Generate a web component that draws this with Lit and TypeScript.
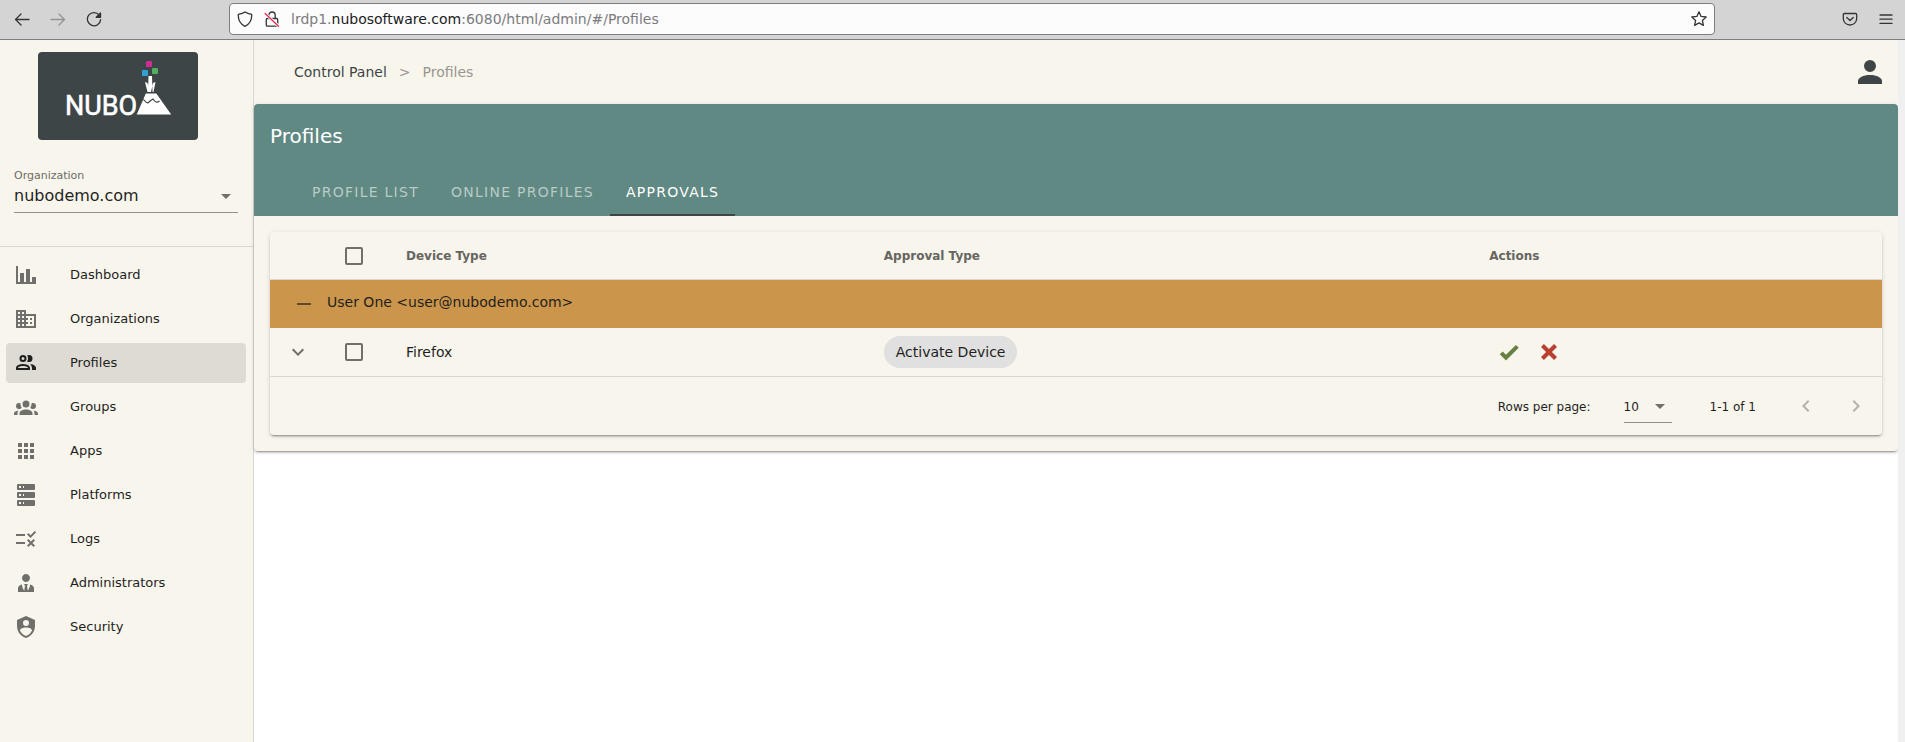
import { LitElement, html, css, svg, nothing } from "lit";
import { customElement, property, state } from "lit/decorators.js";
import { classMap } from "lit/directives/class-map.js";

const icons: Record<string, string> = {
  chart: "M22,21H2V3H4V19H6V10H10V19H12V6H16V19H18V14H22V21Z",
  domain:
    "M18,15H16V17H18M18,11H16V13H18M20,19H12V17H14V15H12V13H14V11H12V9H20M10,7H8V5H10M10,11H8V9H10M10,15H8V13H10M10,19H8V17H10M6,7H4V5H6M6,11H4V9H6M6,15H4V13H6M6,19H4V17H6M12,7V3H2V21H22V7H12Z",
  people:
    "M13.07 10.41A5 5 0 0 0 13.07 4.59A3.39 3.39 0 0 1 15 4A3.5 3.5 0 0 1 15 11A3.39 3.39 0 0 1 13.07 10.41M5.5 7.5A3.5 3.5 0 1 1 9 11A3.5 3.5 0 0 1 5.5 7.5M7.5 7.5A1.5 1.5 0 1 0 9 6A1.5 1.5 0 0 0 7.5 7.5M16 17V19H2V17S2 13 9 13 16 17 16 17M14 17C13.86 16.22 12.67 15 9 15S4.07 16.31 4 17M15.95 13A5.32 5.32 0 0 1 18 17V19H22V17S22 13.37 15.94 13Z",
  group:
    "M12,5.5A3.5,3.5 0 0,1 15.5,9A3.5,3.5 0 0,1 12,12.5A3.5,3.5 0 0,1 8.5,9A3.5,3.5 0 0,1 12,5.5M5,8C5.56,8 6.08,8.15 6.53,8.42C6.38,9.85 6.8,11.27 7.66,12.38C7.16,13.34 6.16,14 5,14A3,3 0 0,1 2,11A3,3 0 0,1 5,8M19,8A3,3 0 0,1 22,11A3,3 0 0,1 19,14C17.84,14 16.84,13.34 16.34,12.38C17.2,11.27 17.62,9.85 17.47,8.42C17.92,8.15 18.44,8 19,8M5.5,18.25C5.5,16.18 8.41,14.5 12,14.5C15.59,14.5 18.5,16.18 18.5,18.25V20H5.5V18.25M0,20V18.5C0,17.11 1.89,15.94 4.45,15.6C3.86,16.28 3.5,17.22 3.5,18.25V20H0M24,20H20.5V18.25C20.5,17.22 20.14,16.28 19.55,15.6C22.11,15.94 24,17.11 24,18.5V20Z",
  apps: "M16,20H20V16H16M16,14H20V10H16M10,8H14V4H10M16,8H20V4H16M10,14H14V10H10M4,14H8V10H4M4,20H8V16H4M10,20H14V16H10M4,8H8V4H4V8Z",
  server:
    "M4,1H20A1,1 0 0,1 21,2V6A1,1 0 0,1 20,7H4A1,1 0 0,1 3,6V2A1,1 0 0,1 4,1M4,9H20A1,1 0 0,1 21,10V14A1,1 0 0,1 20,15H4A1,1 0 0,1 3,14V10A1,1 0 0,1 4,9M4,17H20A1,1 0 0,1 21,18V22A1,1 0 0,1 20,23H4A1,1 0 0,1 3,22V18A1,1 0 0,1 4,17M9,5H10V3H9V5M9,13H10V11H9V13M9,21H10V19H9V21M5,3V5H7V3H5M5,11V13H7V11H5M5,19V21H7V19H5Z",
  rule: "M16.54 11L13 7.46l1.41-1.41 2.12 2.12 4.24-4.24 1.41 1.41L16.54 11zM11 7H2v2h9V7zm10 6.41L19.59 12 17 14.59 14.41 12 13 13.41 15.59 16 13 18.59 14.41 20 17 17.41 19.59 20 21 18.59 18.41 16 21 13.41zM11 15H2v2h9v-2z",
  admin:
    "M12 3C14.21 3 16 4.79 16 7S14.21 11 12 11 8 9.21 8 7 9.79 3 12 3M16 13.54C16 14.6 15.72 17.07 13.81 19.83L13 15L13.94 13.12C13.32 13.05 12.67 13 12 13S10.68 13.05 10.06 13.12L11 15L10.19 19.83C8.28 17.07 8 14.6 8 13.54C5.61 14.24 4 15.5 4 17V21H20V17C20 15.5 18.4 14.24 16 13.54Z",
  shield:
    "M12,1L3,5V11C3,16.55 6.84,21.74 12,23C17.16,21.74 21,16.55 21,11V5L12,1M12,5A3,3 0 0,1 15,8A3,3 0 0,1 12,11A3,3 0 0,1 9,8A3,3 0 0,1 12,5M17.13,17C15.92,18.85 14.11,20.24 12,20.92C9.89,20.24 8.08,18.85 6.87,17C6.53,16.5 6.24,16 6,15.47C6,13.82 8.71,12.47 12,12.47C15.29,12.47 18,13.79 18,15.47C17.76,16 17.47,16.5 17.13,17Z",
  check: "M9,20.42L2.79,14.21L5.62,11.38L9,14.77L18.88,4.88L21.71,7.71L9,20.42Z",
  close:
    "M20 6.91L17.09 4L12 9.09L6.91 4L4 6.91L9.09 12L4 17.09L6.91 20L12 14.91L17.09 20L20 17.09L14.91 12L20 6.91Z",
  minus: "M19,13H5V11H19V13Z",
  down: "M7.41,8.58L12,13.17L16.59,8.58L18,10L12,16L6,10L7.41,8.58Z",
  left: "M15.41,16.58L10.83,12L15.41,7.41L14,6L8,12L14,18L15.41,16.58Z",
  right: "M8.59,16.58L13.17,12L8.59,7.41L10,6L16,12L10,18L8.59,16.58Z",
  caret: "M7,10L12,15L17,10H7Z",
  account:
    "M12,4A4,4 0 0,1 16,8A4,4 0 0,1 12,12A4,4 0 0,1 8,8A4,4 0 0,1 12,4M12,14C16.42,14 20,15.79 20,18V20H4V18C4,15.79 7.58,14 12,14Z",
};

const icon = (name: string, size = 24) =>
  html`<svg width=${size} height=${size} viewBox="0 0 24 24" fill="currentColor" aria-hidden="true">
    ${svg`<path d=${icons[name]}></path>`}
  </svg>`;

const base = css`
  * {
    box-sizing: border-box;
  }
  svg {
    display: block;
    flex: none;
  }
  button,
  select,
  input {
    font: inherit;
    color: inherit;
    margin: 0;
  }
  button {
    display: inline-flex;
    align-items: center;
    justify-content: center;
    padding: 0;
    border: 0;
    background: none;
    cursor: pointer;
  }
  a {
    color: inherit;
    text-decoration: none;
  }
  .pick {
    display: grid;
    align-items: center;
    border-bottom: 1px solid #92908b;
  }
  .pick > * {
    grid-area: 1 / 1;
  }
  .pick svg {
    justify-self: end;
    pointer-events: none;
    color: #706f6b;
  }
  .pick select {
    width: 100%;
    appearance: none;
    border: 0;
    padding: 0;
    background: none;
    outline: none;
  }
`;

@customElement("browser-bar")
class BrowserBar extends LitElement {
  static styles = [
    base,
    css`
      :host {
        display: block;
      }
      .bar {
        display: flex;
        align-items: center;
        height: 40px;
        padding: 0 11px 2px 14px;
        background: #d4d4d4;
        border-bottom: 1px solid #7d7f7f;
        color: #333437;
      }
      .nav {
        display: flex;
        gap: 20px;
        width: 215px;
      }
      .off {
        color: #939393;
      }
      .address {
        display: flex;
        flex: 0 1 1486px;
        align-items: center;
        gap: 11px;
        height: 32px;
        padding: 0 7px;
        border: 1px solid #7d7f7f;
        border-radius: 4px;
        background: #fcfcfc;
      }
      .url {
        flex: 1;
        font-size: 14px;
        color: #7b7b7d;
        white-space: nowrap;
        overflow: hidden;
      }
      .host {
        color: #1b1b1e;
      }
      .tools {
        display: flex;
        gap: 20px;
        margin-left: auto;
      }
    `,
  ];

  render() {
    const line = (content: unknown) =>
      html`<svg width="16" height="16" viewBox="0 0 16 16" fill="none" stroke="currentColor" stroke-width="1.3" stroke-linecap="round" stroke-linejoin="round" aria-hidden="true">${content}</svg>`;
    return html`<header class="bar">
      <div class="nav">
        <button aria-label="Back">${line(svg`<path d="M15 8.5H1.5M7 3L1.500 8.500 7 14"/>`)}</button>
        <button class="off" aria-label="Forward" disabled>${line(svg`<path d="M1 8.500H14.500M9 3l5.500 5.500L9 14"/>`)}</button>
        <button aria-label="Reload">${line(svg`<path d="M13.300 4.200A6.600 6.600 0 1 0 14.600 8.600"/><path d="M14.500 2v4.300h-4.300z" fill="currentColor"/>`)}</button>
      </div>
      <div class="address">
        ${line(svg`<path d="M8 1C6 2.500 3.700 3 1.300 3.300C1 9 3 13 8 15.300C13 13 15 9 14.700 3.300C12.300 3 10 2.500 8 1z"/>`)}
        ${line(svg`<path d="M3.300 7.500h9.400q1 0 1 1v5.700q0 1-1 1H3.300q-1 0-1-1V8.500q0-1 1-1zM4.800 7.500V4.200a3.200 3.200 0 0 1 6.400 0v3.300"/><path d="M1.200 2.500L14.500 15.200" stroke="#fcfcfc" stroke-width="3"/><path d="M1.200 2.500L14.500 15.200" stroke="#e22850"/>`)}
        <div class="url" role="textbox" aria-label="Address">lrdp1.<span class="host">nubosoftware.com</span>:6080/html/admin/#/Profiles</div>
        <button aria-label="Bookmark this page">${line(svg`<path d="M8 .8l2.100 4.600 5.100.600-3.800 3.400 1 5L8 11.900l-4.400 2.500 1-5L.8 6l5.100-.600z"/>`)}</button>
      </div>
      <div class="tools">
        <button aria-label="Save to Pocket">${line(svg`<path d="M2.500 2.500h11q1.200 0 1.200 1.200V7.500A6.700 6.500 0 0 1 1.300 7.500V3.700q0-1.200 1.200-1.200zM4.800 6.500L8 9.500l3.200-3"/>`)}</button>
        <button aria-label="Menu">${line(svg`<path d="M2 4h12M2 8.200h12M2 12.400h12"/>`)}</button>
      </div>
    </header>`;
  }
}

@customElement("side-nav")
class SideNav extends LitElement {
  @property() active = "Profiles";

  private items: [string, string][] = [
    ["Dashboard", "chart"],
    ["Organizations", "domain"],
    ["Profiles", "people"],
    ["Groups", "group"],
    ["Apps", "apps"],
    ["Platforms", "server"],
    ["Logs", "rule"],
    ["Administrators", "admin"],
    ["Security", "shield"],
  ];

  static styles = [
    base,
    css`
      :host {
        display: block;
        width: 254px;
        flex: none;
        background: #f8f5ec;
        border-right: 1px solid #dad7d0;
      }
      .logo {
        margin: 12px 0 0 38px;
        border-radius: 4px;
        background: #3d4546;
      }
      .wordmark {
        font: 400 27px Roboto, sans-serif;
        fill: #fff;
        stroke: #fff;
        stroke-width: 0.6;
        stroke-linejoin: round;
      }
      .org {
        margin: 28px 15px 0 14px;
      }
      .caption {
        display: block;
        font-size: 11px;
        line-height: 16px;
        color: #6c6b67;
      }
      .org .pick {
        height: 29px;
        font-size: 16px;
      }
      .org select {
        padding-bottom: 5px;
      }
      .menu {
        display: flex;
        flex-direction: column;
        gap: 4px;
        margin-top: 33px;
        padding: 8px 7px 8px 6px;
        border-top: 1px solid #dad7d0;
      }
      .org .pick svg {
        margin-bottom: 4px;
      }
      .item {
        display: flex;
        align-items: center;
        gap: 32px;
        height: 40px;
        padding: 0 8px;
        border-radius: 4px;
        font-size: 13px;
        line-height: 20px;
      }
      .item svg {
        color: #706f6b;
      }
      .item.active {
        background: #dedbd4;
      }
      .item.active svg {
        color: #1f1f1e;
      }
    `,
  ];

  render() {
    return html`
      <svg class="logo" width="160" height="88" viewBox="0 0 160 88" role="img" aria-label="Nubo">
        <text class="wordmark" x="27" y="63">NUBO</text>
        <path fill="#fff" stroke="#3d4546" d="M98 63L107.500 41h11L134 63z" />
        <path fill="none" stroke="#3d4546" stroke-width="1.200" d="M102 49q3-3 5 0t4 1 4-3q3 5 6.500 2" />
        <path fill="#fff" d="M110.500 24h3.500l.5 16h-4.500zM107 30l2.500 1 2 9h-2zM117.500 30l-2.500 1-2 9h2.500z" />
        <rect x="108" y="9" width="6" height="6" rx="1" fill="#ce2e93" />
        <rect x="104" y="18" width="6" height="6" rx="1" fill="#2fa3d9" />
        <rect x="114" y="16" width="6" height="6" rx="1" fill="#54ae61" />
      </svg>
      <div class="org">
        <label class="caption" for="org">Organization</label>
        <div class="pick">
          <select id="org"><option>nubodemo.com</option></select>
          ${icon("caret")}
        </div>
      </div>
      <nav class="menu">
        ${this.items.map(
          ([label, name]) => html`<a
            href="#/${label}"
            class=${classMap({ item: true, active: label === this.active })}
            aria-current=${label === this.active ? "page" : nothing}
            >${icon(name)}<span>${label}</span></a
          >`
        )}
      </nav>
    `;
  }
}

@customElement("approvals-table")
class ApprovalsTable extends LitElement {
  @state() private rows = [{ device: "Firefox", approval: "Activate Device" }];

  static styles = [
    base,
    css`
      :host {
        display: block;
        border-radius: 4px;
        background: #f8f5ec;
        box-shadow: 0 3px 1px -2px rgba(0, 0, 0, 0.2), 0 2px 2px rgba(0, 0, 0, 0.14),
          0 1px 5px rgba(0, 0, 0, 0.12);
      }
      table {
        width: 100%;
        table-layout: fixed;
        border-collapse: separate;
        border-spacing: 0;
        font-size: 14px;
      }
      .c-expand {
        width: 56px;
      }
      .c-check {
        width: 64px;
      }
      .c-device {
        width: 29.64%;
      }
      .c-approval {
        width: 37.56%;
      }
      th,
      td {
        height: 48px;
        padding: 0 16px;
        text-align: left;
      }
      th {
        font-size: 12px;
        color: #666561;
        border-bottom: 1px solid #dad7d0;
      }
      .expand {
        display: flex;
        width: 24px;
        height: 24px;
        color: #706f6b;
      }
      .box {
        display: block;
        width: 18px;
        height: 18px;
        margin: 0 3px;
        appearance: none;
        border: 2px solid #706f6b;
        border-radius: 2px;
      }
      .group td {
        background: #cb964b;
      }
      .owner {
        display: flex;
        align-items: center;
        gap: 5px;
        padding-bottom: 4px;
      }
      .toggle {
        width: 36px;
        height: 36px;
        padding-top: 4px;
        color: #5f4a2c;
      }
      .chip {
        display: inline-flex;
        align-items: center;
        height: 32px;
        padding: 0 12px;
        border-radius: 16px;
        background: #e0e0e0;
      }
      .actions {
        display: flex;
      }
      .actions button {
        width: 40px;
        height: 36px;
      }
      .yes {
        color: #66803f;
      }
      .no {
        color: #b93f2e;
      }
      .foot {
        display: flex;
        align-items: center;
        justify-content: flex-end;
        height: 59px;
        padding-right: 8px;
        border-top: 1px solid #dad7d0;
        font-size: 12px;
      }
      .foot label,
      .foot span,
      .foot select {
        padding-top: 2px;
      }
      .foot .pick {
        width: 48px;
        height: 33px;
        margin: 0 38px 0 33px;
      }
      .pages {
        display: flex;
        gap: 14px;
        margin-left: 32px;
      }
      .pages button {
        width: 36px;
        height: 36px;
        color: #b4b1ab;
      }
    `,
  ];

  render() {
    return html`
      <table>
        <colgroup>
          <col class="c-expand" />
          <col class="c-check" />
          <col class="c-device" />
          <col class="c-approval" />
          <col />
        </colgroup>
        <thead>
          <tr>
            <th></th>
            <th><input class="box" type="checkbox" aria-label="Select all" /></th>
            <th scope="col">Device Type</th>
            <th scope="col">Approval Type</th>
            <th scope="col">Actions</th>
          </tr>
        </thead>
        <tbody>
          <tr class="group">
            <td colspan="5">
              <div class="owner">
                <button class="toggle" aria-label="Collapse group">${icon("minus")}</button>
                <span>User One &lt;user@nubodemo.com&gt;</span>
              </div>
            </td>
          </tr>
          ${this.rows.map(
            (r) => html`<tr>
              <td><button class="expand" aria-label="Expand row">${icon("down")}</button></td>
              <td><input class="box" type="checkbox" aria-label="Select ${r.device}" /></td>
              <td>${r.device}</td>
              <td><span class="chip">${r.approval}</span></td>
              <td>
                <div class="actions">
                  <button class="yes" aria-label="Approve">${icon("check")}</button>
                  <button class="no" aria-label="Reject">${icon("close")}</button>
                </div>
              </td>
            </tr>`
          )}
        </tbody>
      </table>
      <div class="foot">
        <label for="size">Rows per page:</label>
        <div class="pick">
          <select id="size"><option>10</option></select>
          ${icon("caret")}
        </div>
        <span>1-1 of 1</span>
        <div class="pages">
          <button aria-label="Previous page" disabled>${icon("left")}</button>
          <button aria-label="Next page" disabled>${icon("right")}</button>
        </div>
      </div>
    `;
  }
}

@customElement("app-root")
class AppRoot extends LitElement {
  @state() private tab = "Approvals";

  static styles = [
    base,
    css`
      :host {
        display: flex;
        flex-direction: column;
        min-height: 100vh;
        background: #fff;
        color: #1f1f1e;
        font-family: "DejaVu Sans", sans-serif;
      }
      .body {
        display: flex;
        flex: 1;
      }
      main {
        flex: 1;
        min-width: 0;
      }
      .track {
        width: 7px;
        background: #f0f0f0;
      }
      .top {
        display: flex;
        align-items: center;
        justify-content: space-between;
        height: 64px;
        padding: 0 10px 0 40px;
        background: #f8f5ec;
      }
      .crumbs {
        display: flex;
        gap: 12px;
        font-size: 14px;
        color: #989690;
      }
      .crumbs a,
      .user {
        color: #3d4546;
      }
      .card {
        border-radius: 4px;
        background: #f8f5ec;
        box-shadow: 0 3px 1px -2px rgba(0, 0, 0, 0.2), 0 2px 2px rgba(0, 0, 0, 0.14),
          0 1px 5px rgba(0, 0, 0, 0.12);
      }
      .head {
        border-radius: 4px 4px 0 0;
        background: #618983;
        color: #fff;
      }
      h1 {
        margin: 0;
        padding: 0 16px;
        font-size: 20px;
        font-weight: 400;
        line-height: 64px;
      }
      .tabs {
        display: flex;
        padding-left: 42px;
      }
      .tab {
        height: 48px;
        padding: 2px 16px 0;
        border-bottom: 2px solid transparent;
        font-size: 14px;
        letter-spacing: 0.09em;
        text-transform: uppercase;
        color: #b8cbc8;
      }
      .tab.on {
        border-color: #3d4546;
        color: #fff;
      }
      .content {
        padding: 16px;
      }
    `,
  ];

  render() {
    return html`
      <browser-bar></browser-bar>
      <div class="body">
        <side-nav active="Profiles"></side-nav>
        <main>
          <div class="top">
            <nav class="crumbs" aria-label="Breadcrumb">
              <a href="#/">Control Panel</a><span>&gt;</span><span>Profiles</span>
            </nav>
            <button class="user" aria-label="Account">${icon("account", 36)}</button>
          </div>
          <section class="card">
            <div class="head">
              <h1>Profiles</h1>
              <div class="tabs" role="tablist">
                ${["Profile List", "Online Profiles", "Approvals"].map(
                  (t) => html`<button
                    role="tab"
                    class=${classMap({ tab: true, on: t === this.tab })}
                    aria-selected=${t === this.tab}
                    @click=${() => (this.tab = t)}
                  >
                    ${t}
                  </button>`
                )}
              </div>
            </div>
            <div class="content"><approvals-table></approvals-table></div>
          </section>
        </main>
        <div class="track"></div>
      </div>
    `;
  }
}
